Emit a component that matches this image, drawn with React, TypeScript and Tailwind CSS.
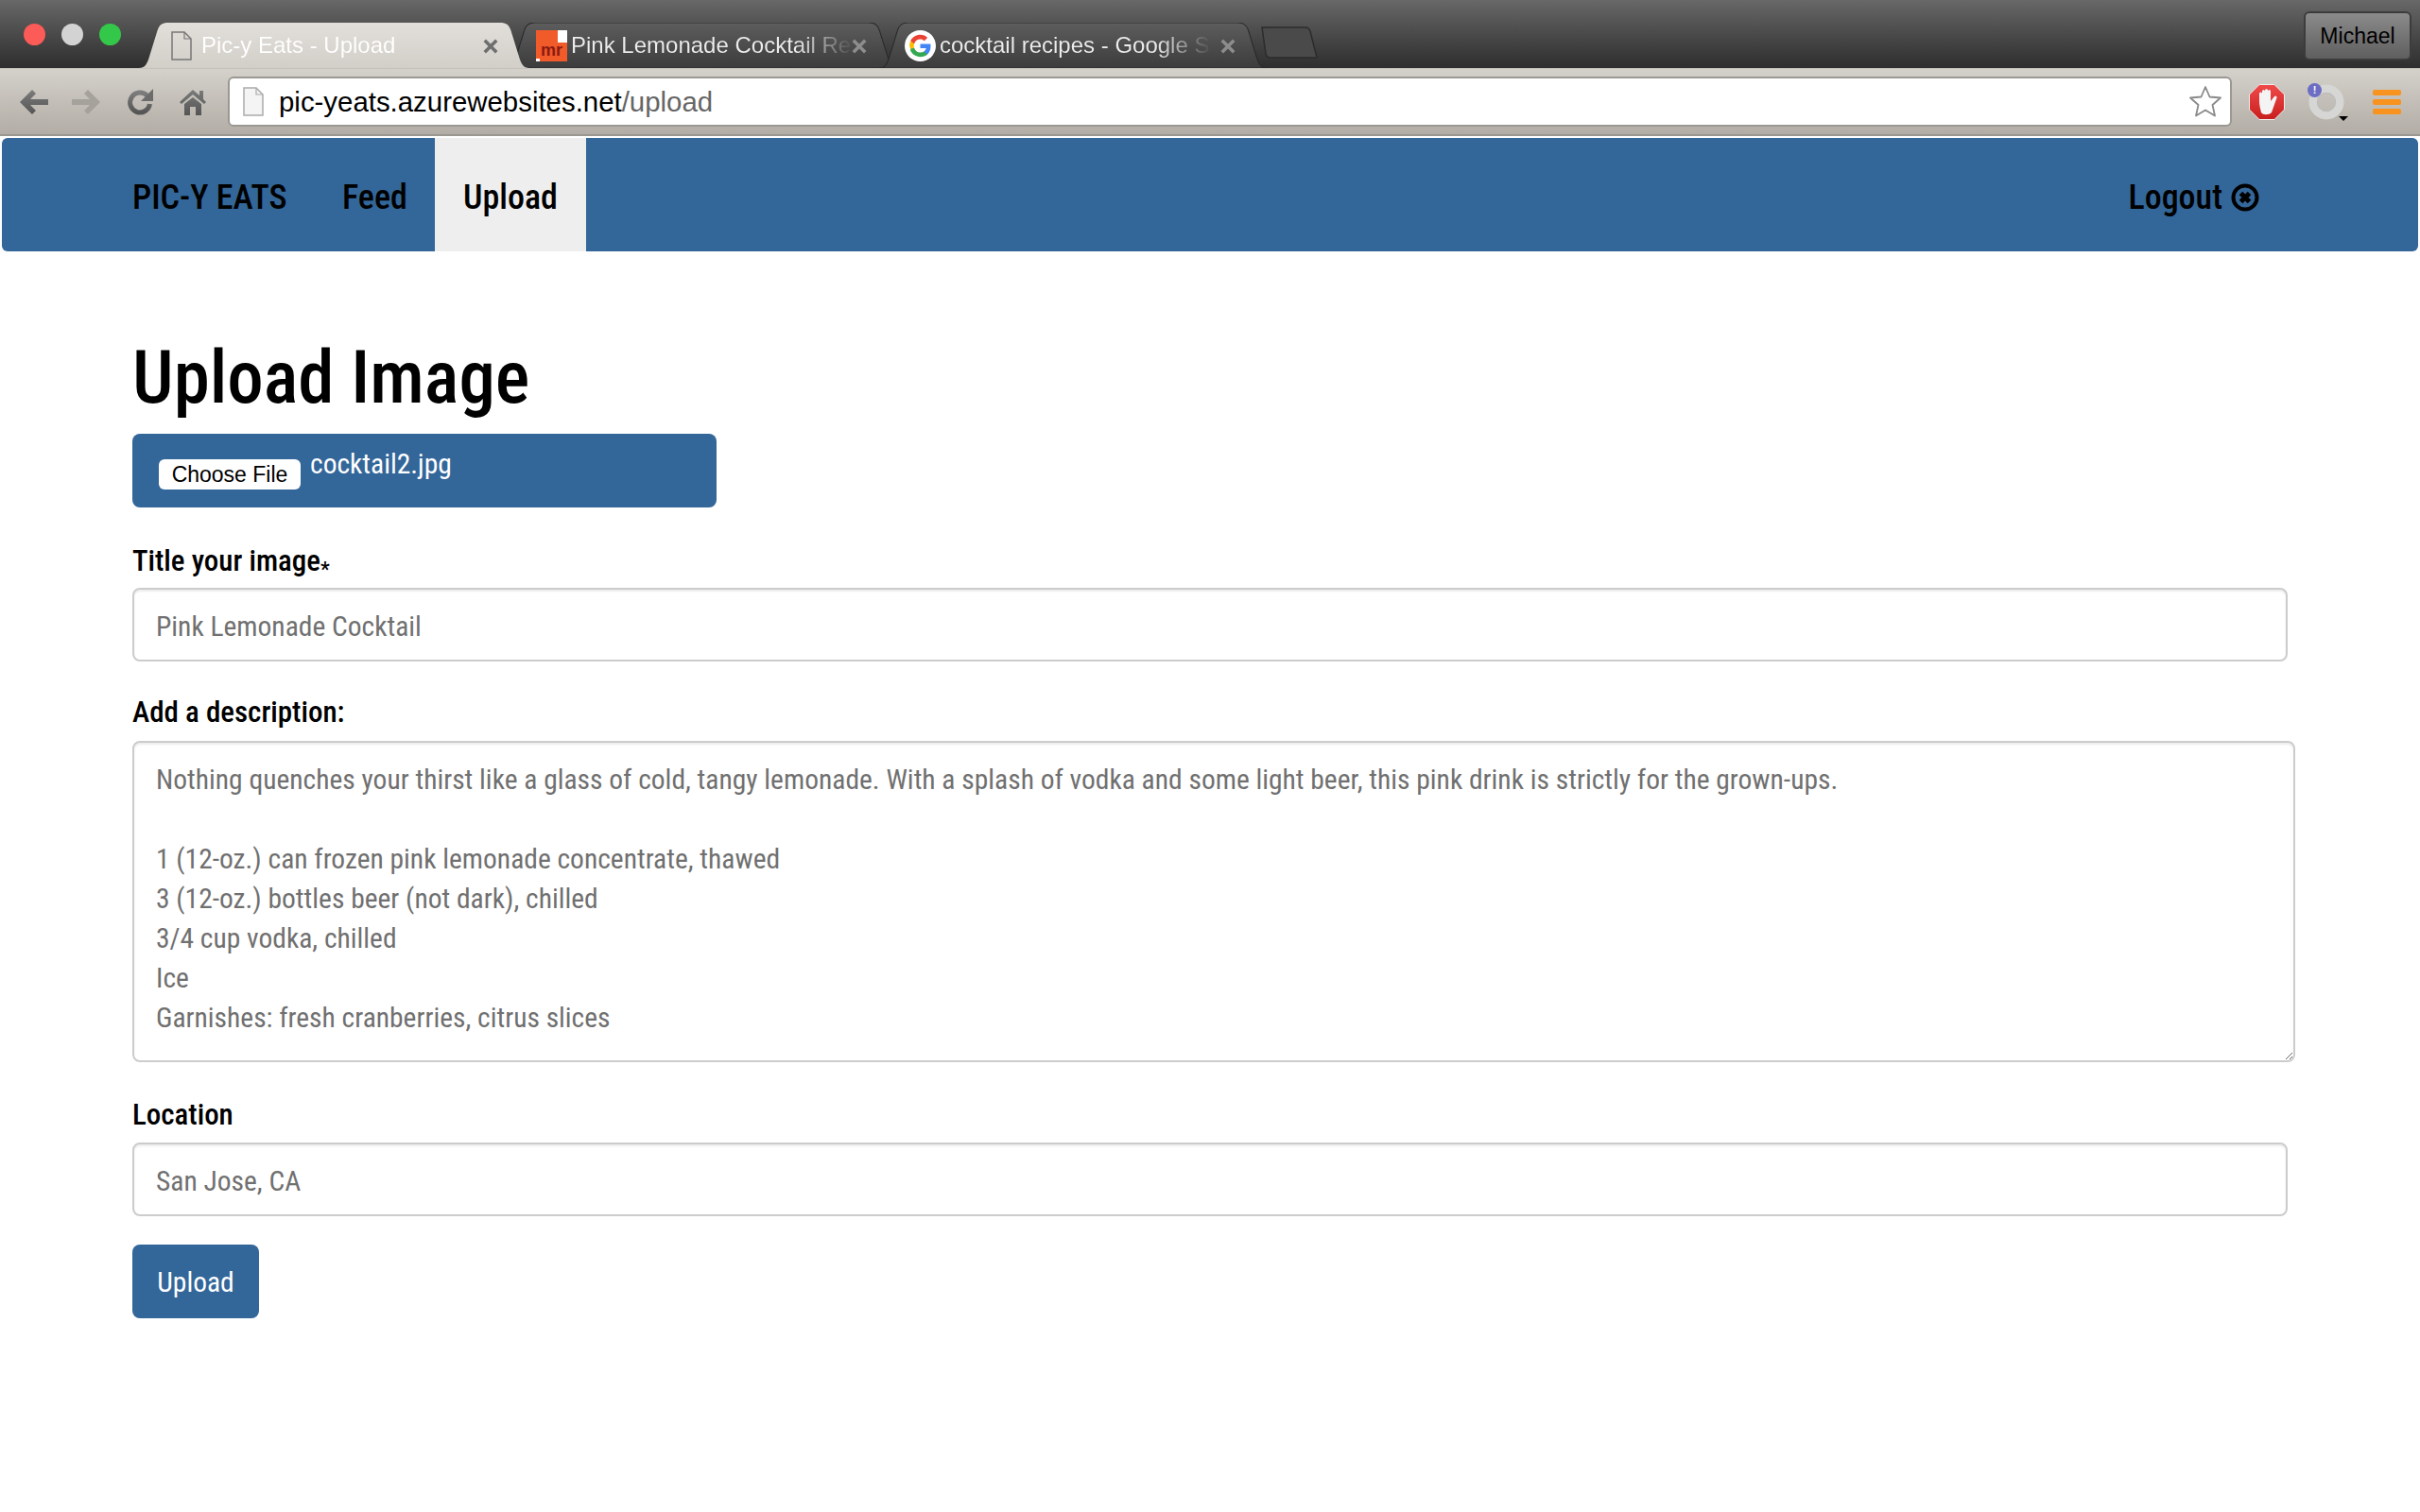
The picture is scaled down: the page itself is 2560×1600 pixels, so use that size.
import React from "react";

const news = "font-['Roboto_Condensed',sans-serif]";
const sans = "font-['Liberation_Sans',sans-serif]";

function TabShape({ active }: { active?: boolean }) {
  const id = active ? "tabA" : "tabI";
  return (
    <svg className="absolute inset-0 h-full w-full" viewBox="0 0 400 48" preserveAspectRatio="none">
      <defs>
        <linearGradient id={id} x1="0" y1="0" x2="0" y2="1">
          <stop offset="0" stopColor={active ? "#e2dfda" : "#5d5d5d"} />
          <stop offset="1" stopColor={active ? "#d2cfc9" : "#3c3c3c"} />
        </linearGradient>
      </defs>
      <path
        d="M0 48 C6 48 8 44 10 38 L19 8 C21 2 24 0 30 0 L370 0 C376 0 379 2 381 8 L390 38 C392 44 394 48 400 48 Z"
        fill={`url(#${id})`}
        stroke={active ? "none" : "#2a2a2a"}
        strokeWidth="1"
      />
    </svg>
  );
}

function CloseX({ color }: { color: string }) {
  return (
    <svg width="16" height="16" viewBox="0 0 16 16" className="shrink-0">
      <path d="M3 3 L13 13 M13 3 L3 13" stroke={color} strokeWidth="3.500" strokeLinecap="square" />
    </svg>
  );
}

function GoogleG() {
  return (
    <svg width="33" height="33" viewBox="0 0 48 48" className="shrink-0">
      <circle cx="24" cy="24" r="24" fill="#fff" />
      <path d="M40 24.600c0-1.200-.1-2.300-.3-3.400H24v6.400h9c-.4 2.100-1.600 3.900-3.400 5.100v4.300h5.500c3.200-3 4.900-7.300 4.900-12.400z" fill="#4285f4" />
      <path d="M24 41c4.500 0 8.300-1.500 11.100-4l-5.500-4.300c-1.500 1-3.400 1.600-5.600 1.600-4.400 0-8-2.900-9.300-6.900H9v4.400C11.800 37.300 17.500 41 24 41z" fill="#34a853" />
      <path d="M14.700 27.400c-.7-2-.7-4.300 0-6.300v-4.400H9c-2 3.800-2 8.300 0 12.100z" fill="#fbbc05" />
      <path d="M24 13.800c2.400 0 4.600.8 6.300 2.500l4.800-4.800C32.300 8.800 28.500 7 24 7c-6.500 0-12.200 3.700-15 9.300l5.700 4.400c1.300-4 4.900-6.900 9.300-6.900z" fill="#ea4335" />
    </svg>
  );
}

function MrFavicon() {
  return (
    <div className="relative flex h-[33px] w-[33px] shrink-0 items-center justify-center overflow-hidden bg-[#f15a29]">
      <div className="absolute right-0 top-0 h-[13px] w-[10px] bg-white" />
      <div className="absolute bottom-0 left-0 h-[3px] w-[4px] bg-white" />
      <span className={`${sans} mt-[10px] text-[18px] leading-[14px] font-bold text-[#8a1a12]`}>mr</span>
    </div>
  );
}

function Tab({ x, w, active, icon, title, closeColor, fade }: { x: number; w: number; active?: boolean; icon: React.ReactNode; title: string; closeColor: string; fade: string; }) {
  return (
    <div className={`relative h-[48px] shrink-0 ${active ? "z-10" : ""}`} style={{ width: w, marginLeft: x }}>
      <TabShape active={active} />
      <div className="relative flex h-full items-center">
        {icon}
        <span className={`${sans} ${fade} whitespace-nowrap bg-clip-text text-[24px] leading-[30px] text-transparent`}>{title}</span>
      </div>
      <div className="absolute right-[33px] top-[17px]"><CloseX color={closeColor} /></div>
    </div>
  );
}

function Grad({ id, a, b }: { id: string; a: string; b: string }) {
  return (
    <defs>
      <linearGradient id={id} x1="0" y1="0" x2="0" y2="1">
        <stop offset="0" stopColor={a} />
        <stop offset="1" stopColor={b} />
      </linearGradient>
    </defs>
  );
}

function DocIcon({ stroke = "#777", fill = "none", w = 22, h = 31 }: { stroke?: string; fill?: string; w?: number; h?: number }) {
  return (
    <svg width={w} height={h} viewBox="0 0 22 31" className="shrink-0">
      <path d="M1 1 H14 L21 8 V30 H1 Z" fill={fill} stroke={stroke} strokeWidth="1.500" />
      <path d="M14 1 V8 H21" fill="none" stroke={stroke} strokeWidth="1.200" />
    </svg>
  );
}

function Toolbar() {
  return (
    <div className="flex h-[72px] items-center border-t border-[#c5c2bb] border-b-2 border-b-[#9a9690] bg-gradient-to-b from-[#d4d1cb] to-[#b2ada5] pl-[20px] pr-[19px]">
      <svg width="32" height="30" viewBox="0 0 32 30" className="shrink-0">
        <Grad id="bk" a="#7c7c7c" b="#555" />
        <path d="M14 2 L1 15 L14 28 L18 24 L12 18 H31 V12 H12 L18 6 Z" fill="url(#bk)" />
      </svg>
      <svg width="32" height="30" viewBox="0 0 32 30" className="ml-[23px] shrink-0">
        <path d="M18 2 L31 15 L18 28 L14 24 L20 18 H1 V12 H20 L14 6 Z" fill="#a5a29c" />
      </svg>
      <svg width="30" height="30" viewBox="0 0 30 30" className="ml-[26px] shrink-0">
        <Grad id="rl" a="#7c7c7c" b="#555" />
        <path d="M22.500 8 A10.500 10.500 0 1 0 25.500 17" fill="none" stroke="url(#rl)" strokeWidth="5" />
        <path d="M29 1 V14 H16 Z" fill="#6c6c6c" />
      </svg>
      <svg width="28" height="30" viewBox="0 0 28 30" className="ml-[27px] shrink-0">
        <Grad id="hm" a="#7a7a7a" b="#555" />
        <path d="M14 2 L21 8 V3 H25 V12 L28 15 L26 17 L14 7 L2 17 L0 15 Z M5 17 L14 10 L23 17 V29 H17 V20 H11 V29 H5 Z" fill="url(#hm)" />
      </svg>
      <div className="ml-[23px] flex h-[53px] w-[2120px] shrink-0 items-center rounded-[6px] border-2 border-[#9b9893] bg-white pl-[14px] pr-[8px]">
        <DocIcon stroke="#aaa" fill="#f4f4f4" />
        <div className={`${sans} ml-[16px] text-[29.400px] leading-[40px] text-black`}>
          pic-yeats.azurewebsites.net<span className="text-[#666]">/upload</span>
        </div>
        <svg width="36" height="35" viewBox="0 0 36 35" className="ml-auto shrink-0">
          <path d="M18 2 L22.500 12.500 L34 13.500 L25.500 21 L28 32.500 L18 26.500 L8 32.500 L10.500 21 L2 13.500 L13.500 12.500 Z" fill="#fff" stroke="#8a8a8a" strokeWidth="1.800" strokeLinejoin="round" />
        </svg>
      </div>
      <svg width="38" height="38" viewBox="0 0 38 38" className="ml-[18px] shrink-0">
        <Grad id="ab" a="#f04a4a" b="#c81e1e" />
        <path d="M11 0.500 H27 L37.500 11 V27 L27 37.500 H11 L0.500 27 V11 Z" fill="url(#ab)" stroke="#eee" strokeWidth="1" />
        <path d="M13 30 C12 26 11 22 11 18 V10 a1.500 1.500 0 0 1 3 0 V7.500 a1.500 1.500 0 0 1 3 0 V6.500 a1.500 1.500 0 0 1 3 0 V7.500 a1.500 1.500 0 0 1 3 0 V18 L27 13 a1.500 1.500 0 0 1 2.500 1.500 L24 30 C21 33 15 33 13 30 Z" fill="#f4f4f4" />
      </svg>
      <div className="relative ml-[25px] h-[38px] w-[38px] shrink-0">
        <svg width="38" height="38" viewBox="0 0 38 38">
          <circle cx="19" cy="19" r="14" fill="none" stroke="#d6d6d4" strokeWidth="9" />
          <circle cx="19" cy="19" r="9.500" fill="none" stroke="#bdbdbb" strokeWidth="1.500" />
        </svg>
        <div className={`${sans} absolute -left-[1px] -top-[1px] flex h-[15px] w-[15px] items-center justify-center rounded-full bg-[#6d6dc4] text-[11px] leading-none font-bold text-white`}>!</div>
        <div className="absolute -bottom-[1px] right-[-4px] h-0 w-0 border-x-[5px] border-t-[5px] border-x-transparent border-t-black" />
      </div>
      <div className="ml-[30px] flex w-[30px] shrink-0 flex-col gap-[4px]">
        <div className="h-[6px] rounded-[2px] bg-[#f7931e]" />
        <div className="h-[6px] rounded-[2px] bg-[#f7931e]" />
        <div className="h-[6px] rounded-[2px] bg-[#f7931e]" />
      </div>
    </div>
  );
}

function TabStrip() {
  return (
    <div className="flex h-[72px] items-end bg-gradient-to-b from-[#686868] to-[#2e2e2e]">
      <div className="mb-[24px] ml-[25px] flex shrink-0 gap-[17px] self-end">
        <div className="h-[23px] w-[23px] rounded-full bg-[#fc5b57]" />
        <div className="h-[23px] w-[23px] rounded-full bg-[#d3d3d3]" />
        <div className="h-[23px] w-[23px] rounded-full bg-[#34c84a]" />
      </div>
      <Tab x={19} w={413} active
        icon={<div className="ml-[34px] mr-[10px]"><DocIcon stroke="#777" /></div>}
        title="Pic-y Eats - Upload" closeColor="#6e6e6e"
        fade="bg-gradient-to-r from-white to-white" />
      <Tab x={-25} w={415}
        icon={<div className="ml-[32px] mr-[4px]"><MrFavicon /></div>}
        title="Pink Lemonade Cocktail Re" closeColor="#8d8d8d"
        fade="bg-gradient-to-r from-[#ececec] from-80% to-[#77777730]" />
      <Tab x={-20} w={410}
        icon={<div className="ml-[27px] mr-[4px]"><GoogleG /></div>}
        title="cocktail recipes - Google S" closeColor="#8d8d8d"
        fade="bg-gradient-to-r from-[#ececec] from-80% to-[#77777730]" />
      <svg width="60" height="34" viewBox="0 0 60 34" className="mb-[10px] -ml-[6px] shrink-0">
        <path d="M1 1 H47 C50 1 51 2 52 5 L59 33 H10 C7 33 6 32 5 29 Z" fill="#4a4a4a" stroke="#2c2c2c" strokeWidth="1.500" />
      </svg>
      <div className="mb-[8px] ml-auto mr-[9px] flex h-[52px] w-[114px] shrink-0 items-center justify-center rounded-[6px] border-2 border-[#3c3c3c] bg-gradient-to-b from-[#8b8b8b] to-[#5f5f5f]">
        <span className={`${sans} text-[23px] leading-none text-black`}>Michael</span>
      </div>
    </div>
  );
}

function Navbar() {
  return (
    <nav className={`${news} mx-[2px] mt-[2px] flex h-[120px] items-stretch rounded-[6px] bg-[#336699] pl-[138px] pr-[168px] text-[36px] font-medium text-black`}>
      <a className="flex w-[222px] items-center pt-[6px]">PIC-Y EATS</a>
      <a className="flex w-[98px] items-center pt-[6px]">Feed</a>
      <a className="flex w-[160px] items-center justify-center bg-[#eeeeee] pt-[6px]">Upload</a>
      <a className="ml-auto flex items-center gap-[9px] pt-[6px]">
        Logout
        <svg width="30" height="30" viewBox="0 0 30 30">
          <circle cx="15" cy="15" r="12.500" fill="none" stroke="#000" strokeWidth="4" />
          <path d="M10.500 10.500 L19.500 19.500 M19.500 10.500 L10.500 19.500" stroke="#000" strokeWidth="5" />
        </svg>
      </a>
    </nav>
  );
}

const field = "block rounded-[8px] border-2 border-[#cccccc] bg-white px-[23px] text-[#707070] text-[29.500px] shadow-[inset_0_2px_2px_rgba(0,0,0,0.075)] outline-none";
const label = "block text-[31px] leading-[40px] font-medium text-black";

const desc = `Nothing quenches your thirst like a glass of cold, tangy lemonade. With a splash of vodka and some light beer, this pink drink is strictly for the grown-ups.

1 (12-oz.) can frozen pink lemonade concentrate, thawed
3 (12-oz.) bottles beer (not dark), chilled
3/4 cup vodka, chilled
Ice
Garnishes: fresh cranberries, citrus slices`;

export default function App() {
  return (
    <div className="relative min-h-[1600px] bg-white">
      <TabStrip />
      <Toolbar />
      <Navbar />
      <main className={`${news} px-[140px]`}>
        <h1 className="mt-[94px] text-[77px] leading-[80px] font-medium text-black">Upload Image</h1>
        <div className="mt-[19px] flex h-[78px] w-[618px] items-start rounded-[8px] bg-[#336699] pl-[28px]">
          <button className={`${sans} mt-[27px] h-[32px] w-[150px] rounded-[6px] bg-white text-[23px] leading-none text-black`}>Choose File</button>
          <span className="ml-[10px] mt-[12px] text-[29.500px] leading-[40px] text-white">cocktail2.jpg</span>
        </div>
        <form>
          <label className={`${label} mt-[37px]`}>Title your image<span className="inline-block translate-y-[6px] text-[22px] leading-none">*</span></label>
          <input readOnly value="Pink Lemonade Cocktail" className={`${field} mt-[8px] h-[78px] w-[2280px] pt-[3px]`} />
          <label className={`${label} mt-[34px]`}>Add a description:</label>
          <textarea readOnly value={desc} className={`${field} mt-[10px] h-[340px] w-[2288px] resize py-[18px] leading-[42px]`} />
          <label className={`${label} mt-[36px]`}>Location</label>
          <input readOnly value="San Jose, CA" className={`${field} mt-[9px] h-[78px] w-[2280px] pt-[3px]`} />
          <button type="button" className="mt-[30px] flex h-[78px] w-[134px] items-center justify-center rounded-[8px] bg-[#336699] pt-[2px] text-[29.500px] text-white">Upload</button>
        </form>
      </main>
    </div>
  );
}
